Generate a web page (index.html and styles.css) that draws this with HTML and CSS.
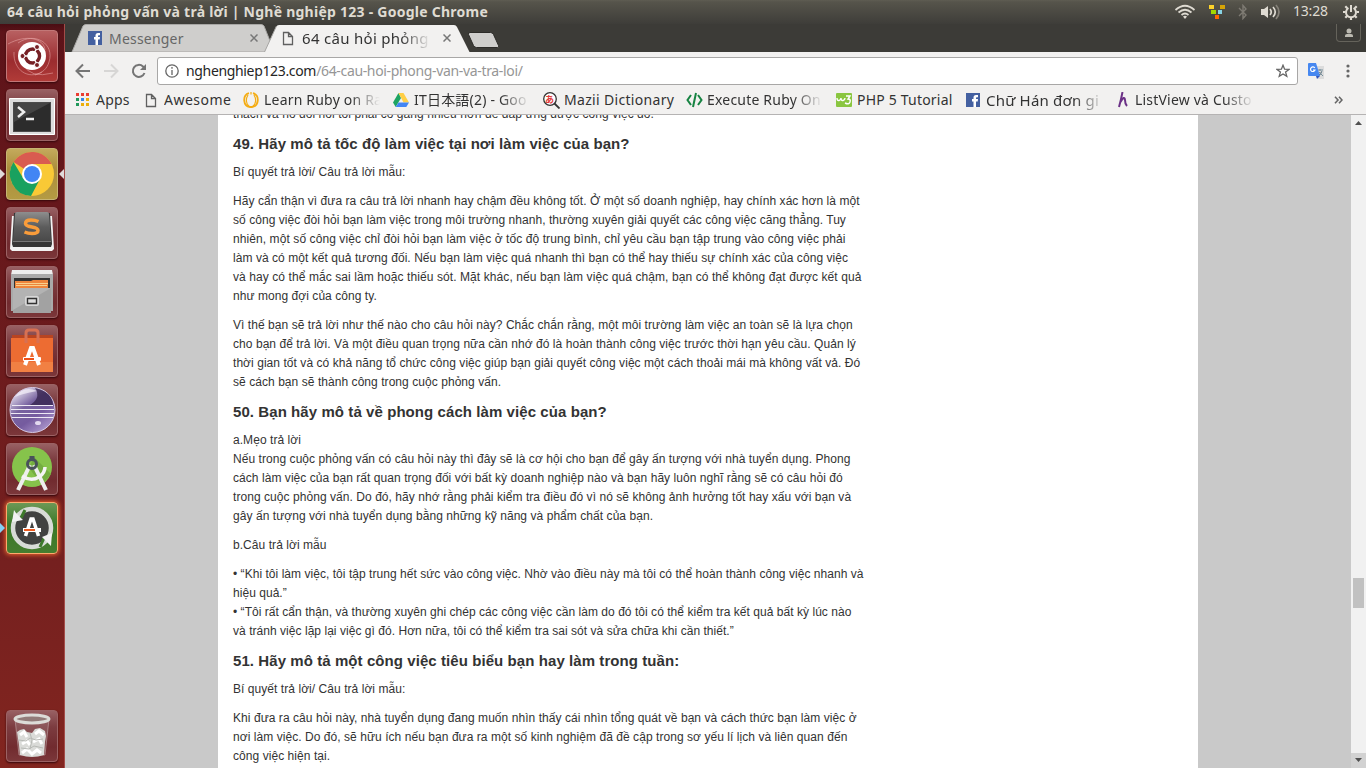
FILE: index.html
```html
<!DOCTYPE html>
<html lang="vi">
<head>
<meta charset="utf-8">
<title>64 câu hỏi phỏng vấn và trả lời | Nghề nghiệp 123</title>
<link rel="stylesheet" href="styles.css">
</head>
<body>
<header class="panel">
  <div class="panel-title">64 câu hỏi phỏng vấn và trả lời | Nghề nghiệp 123 - Google Chrome</div>
  <div class="indicators">
    <svg width="22" height="16" viewBox="0 0 22 16" fill="none" stroke="#dfdbd2" stroke-width="1.7"><path d="M1.500 6Q11-2.500 20.500 6M4.500 8.500Q11 3 17.500 8.500M7.500 11Q11 8 14.500 11"/><path d="M9 12.500Q11 11 13 12.500L11 15Z" fill="#dfdbd2" stroke="none"/></svg>
    <svg width="16" height="16" viewBox="0 0 16 16"><path fill="#fcd22a" d="M0 1h5v4H0z"/><path fill="#d5a406" d="M11 1h5v4h-5z"/><path fill="#a4d800" d="M2 6h5v4H2z"/><path fill="#87d3e4" d="M9 6h4v4H9z"/><path fill="#ff6600" d="M6 11h4v4H6z"/></svg>
    <svg width="10" height="16" viewBox="0 0 10 16" fill="none" stroke="#7e7b73" stroke-width="1.4"><path d="M1 4l7 7-3 3.500V1.500L8 5l-7 7"/></svg>
    <svg width="20" height="16" viewBox="0 0 20 16" fill="none" stroke="#dfdbd2" stroke-width="1.7"><path d="M0 5h3l4-3v12l-4-3H0z" fill="#dfdbd2" stroke="none"/><path d="M9 5q2.500 3 0 6M12 3q4.500 5 0 10"/><path d="M15 1q6 7 0 14" stroke="#858178"/></svg>
    <span class="clock">13:28</span>
    <svg width="16" height="16" viewBox="0 0 16 16" fill="none" stroke="#dfdbd2"><path stroke-width="2" d="M5.500 4A5 5 0 1 0 10.500 4M8 1v7"/><path stroke-width="2.200" d="M0 8h2.500M13.500 8H16M2.300 2.300l2 2M13.700 2.300l-2 2M2.300 13.700l2-2M13.700 13.700l-2-2M8 13.500V16"/></svg>
  </div>
</header>
<div class="desktop">
<nav class="launcher">
  <div class="tile ubuntu"><svg viewBox="0 0 52 52"><g fill="none" stroke="#e9a9a9" stroke-opacity=".55"><path d="M12 13C29 1 49 14 43 32C41 39 36 43 29 45"/><path d="M8 22C7 40 22 50 36 42M2 14C20 4 38 8 39 20M17 34Q24 49 47 43"/></g><circle cx="26" cy="26" r="14" fill="#fff"/><circle cx="26.500" cy="26" r="7" fill="none" stroke="#762025" stroke-width="3.500"/><path d="M26.500 26H17M26.500 26l5-9M26.500 26l5 9" stroke="#fff" stroke-width="1.500"/><circle cx="26.500" cy="26" r="5" fill="#fff"/><g fill="#762025" stroke="#fff"><circle cx="16.500" cy="26" r="2.500"/><circle cx="31" cy="17" r="2.500"/><circle cx="31" cy="35" r="2.500"/></g></svg></div>
  <div class="tile"><svg viewBox="0 0 52 52"><path fill="#ddd" stroke="#fff" d="M3.500 9.500h45v36h-45z"/><path fill="#4b4b4b" d="M7 13h38v30H7z"/><path fill="#2c2c2c" d="M8 14h36v28H8z"/><path fill="#444" d="M8 14h36L8 33z"/><path d="M12 18l6 5-6 5" fill="none" stroke="#eee" stroke-width="2.500"/><path stroke="#eee" stroke-width="2.500" d="M20 30h8"/></svg></div>
  <div class="tile chrome active"><svg viewBox="0 0 52 52"><circle cx="26" cy="26" r="22" fill="#f9c936"/><path fill="#d95b50" d="M26 26L7.500 14A22 22 0 0 1 45.500 16H26z"/><path fill="#19a15f" d="M26 26l-9 4L7.500 14A22 22 0 0 0 25 48l9-17z"/><circle cx="26" cy="26" r="10" fill="#fff"/><circle cx="26" cy="26" r="8" fill="#4285f4"/></svg><i class="pip left"></i><i class="pip right"></i></div>
  <div class="tile"><svg viewBox="0 0 52 52"><defs><linearGradient id="key" x1="0" y1="0" x2="0" y2="1"><stop stop-color="#8e8e8e"/><stop offset=".5" stop-color="#5c5c5c"/><stop offset="1" stop-color="#484848"/></linearGradient></defs><path fill="#f2f2f2" d="M6 9h40l2 33-2 2H6l-2-2z"/><path fill="#363636" d="M8 6h36l2 31-1 3H7l-1-3z"/><path fill="url(#key)" d="M11 5h30q2 0 2 2l2 26q0 2-3 2H10q-3 0-3-2L9 7q0-2 2-2z"/><path fill="#777" d="M7 34h38v1H7z"/><path d="M32.500 14.500Q29 13 25 13Q19.500 13 19.500 16.500Q19.500 19 26 20Q32 21 32 23.500Q32 26.500 26 26.500Q22 26.500 18.500 25" fill="none" stroke="#f99c3a" stroke-width="3.500"/></svg></div>
  <div class="tile"><svg viewBox="0 0 52 52"><path fill="#eee" d="M6 4h40l1 5v35H5V9z"/><path fill="#aaa" d="M5 8h42v37H5z"/><path fill="#333" d="M8 12h36v14H8z"/><path fill="#ee853c" d="M9 15h16l2-1h15v9H9z"/><path stroke="#f8d18e" d="M10 17.500h32M10 19.500h31"/><path fill="#a2a2a2" d="M7 22h38v25H7z"/><path fill="#b3b3b3" d="M7 22h38L7 44z"/><rect x="20" y="31" width="12" height="8" rx="1" fill="#eee" stroke="#d7d7d7" stroke-width="2"/><path fill="#ddd" stroke="#333" stroke-width="1.400" d="M21.500 32.500h9v5h-9z"/></svg></div>
  <div class="tile"><svg viewBox="0 0 52 52"><path fill="#b84421" d="M6 10h41v5H6z"/><path fill="#ed6c32" d="M5 13h42v34H5z"/><path fill="#f18043" d="M5 37h42v10H5z"/><path d="M20 18V8q0-3 3-3h6q3 0 3 3v10" fill="none" stroke="#d87052" stroke-width="3"/><path d="M19 40l6-17h2l6 17" fill="none" stroke="#fff" stroke-width="4"/><rect x="17" y="32" width="18" height="4" rx="1" fill="#fff"/><path fill="#ed5119" d="M18 33h10v2H18z"/></svg></div>
  <div class="tile"><svg viewBox="0 0 52 52"><defs><linearGradient id="orb" x1=".2" y1="0" x2=".9" y2="1"><stop stop-color="#f1edf7"/><stop offset=".35" stop-color="#77629f"/><stop offset=".6" stop-color="#755b9f"/><stop offset="1" stop-color="#bba6d8"/></linearGradient></defs><circle cx="26.500" cy="26" r="22.500" fill="url(#orb)" stroke="#d5c9e5"/><path fill="#312049" fill-opacity=".75" d="M29 4Q47 8 47 22H22Q36 15 29 4"/><path fill="#f1edf7" fill-opacity=".75" d="M9 13Q18 1 31 7Q15 10 9 13"/><path stroke="#eee9f4" stroke-width="1.100" d="M6 21.500h41M5 25.500h43M5 29.500h43M6 33.500h41"/><ellipse cx="32" cy="39" rx="3" ry="2" fill="#e3d9ef"/></svg></div>
  <div class="tile"><svg viewBox="0 0 52 52"><circle cx="26" cy="24" r="20" fill="#86c34b"/><path fill="#74ad40" d="M28 14l17 17-9 11-13-17z"/><path d="M24 22L12 47M28 22l12 25" stroke="#eee" stroke-width="4"/><path d="M16 33q9 6 17 1 6-4 6-10" fill="none" stroke="#f4f4f4" stroke-width="3.500"/><circle cx="26" cy="21" r="4.500" fill="none" stroke="#49515a" stroke-width="3"/><path fill="#49515a" d="M23.500 13h5v4h-5z"/></svg></div>
  <div class="tile updater"><svg viewBox="0 0 52 52"><circle cx="26" cy="26" r="19" fill="#414241" stroke="#d8dbd7" stroke-width="4.500"/><path stroke="#3d792b" stroke-width="3" d="M15 16l4-8M38 36l-4 9"/><path fill="#f2f2f2" d="M8 8l2 3 7 7-11 2zM46 31l-1 13-9-9z"/><path d="M19.500 34l5.500-17h2l5.500 17" fill="none" stroke="#fff" stroke-width="3.500"/><rect x="17" y="26" width="18" height="4" fill="#fff"/><path fill="#ed5b20" d="M18 27h11v2H18z"/></svg><i class="pip left blue"></i></div>
  <div class="tile trash"><svg viewBox="0 0 52 52"><path fill="#ddd" fill-opacity=".15" stroke="#ceb9b9" stroke-opacity=".5" d="M9 9h34l-4 36H13z"/><path fill="#dadbd8" d="M11 22l3-2 4-1 3 3 5 1 3-4 5-1 5 3 1 5-1 6-1 13q-12 4-24 0l-1-10z"/><path d="M14 25l4-3 3 5M29 24l4-3 5 4M16 34l5-3 3 4M27 32l6-3 3 5M16 43l5-4 5 5 5-4 4 3" fill="none" stroke="#fff" stroke-width="3"/><path d="M13 30l7 1 4-3 6 2 7-1M15 38l8 1 5-3 9 2M24 23l2 7-2 9" fill="none" stroke="#b7b9b5"/><ellipse cx="26" cy="9" rx="17" ry="4" fill="#927b79" stroke="#dcdcd8" stroke-width="3"/></svg></div>
</nav>
<main class="browser">
  <div class="tabs">
    <svg class="tab-shapes" width="1301" height="28" viewBox="0 0 1301 28"><path fill="#cfcecc" stroke="#a8a7a5" d="M7 28L18 2q1-1.500 3-1.500H196q2 0 3 1.500l8 20-2 6z"/><path fill="#f2f1f0" d="M199 29l12-26q1-2 3-2H389q2 0 3 2l13 26z"/><path stroke="#a6a5a3" fill="none" d="M199.500 28l12-26"/><path fill="#cfcecc" stroke="#2c2b28" d="M405 8.500q-2 0-1.500 2l5 11q1 2 3 2h21q2 0 1-2l-5-11q-1-2-3-2z"/></svg>
    <div class="tab first"><svg class="fb" viewBox="0 0 14 14"><path fill="#4460a0" d="M0 0h14v14H0z"/><path fill="#fff" d="M7.500 14V8.500H6V6h1.500V4.500Q7.500 2 10 2h2v2.200h-1.200Q10 4.200 10 5v1h2l-.3 2.500H10V14z"/></svg><span class="label messenger">Messenger</span><svg class="close" viewBox="0 0 8 8"><path d="M.5.5l7 7M7.500.5l-7 7"/></svg></div>
    <div class="tab second"><svg class="doc" viewBox="0 0 12 15"><path d="M1.500 1.500h5l4 4v8h-9zM6.500 1.500v4h4"/></svg><span class="label current fade">64 câu hỏi phỏng</span><svg class="close" viewBox="0 0 8 8"><path d="M.5.5l7 7M7.500.5l-7 7"/></svg></div>
    <div class="profile"><svg width="10" height="10" viewBox="0 0 10 10"><circle cx="5" cy="3" r="2.500"/><path d="M1 9V7.500Q1 6 3 6h4q2 0 2 1.500V9z"/></svg></div>
  </div>
  <div class="toolbar">
    <svg width="16" height="16" viewBox="0 0 16 16" class="tool"><path d="M15 8H2M8 1.500L1.500 8 8 14.500"/></svg>
    <svg width="16" height="16" viewBox="0 0 16 16" class="tool pale"><path d="M1 8h13M8 1.500L14.500 8 8 14.500"/></svg>
    <svg width="16" height="16" viewBox="0 0 16 16" class="tool"><path d="M13.500 10A6 6 0 1 1 12 3.500l2 2"/><path fill="#757575" stroke="none" d="M15 1v6H9z"/></svg>
    <div class="omnibox"><svg width="14" height="14" viewBox="0 0 14 14" class="info"><circle cx="7" cy="7" r="6.200"/><path d="M7 6v5M7 3v1.800"/></svg><div class="url">nghenghiep123.com<span>/64-cau-hoi-phong-van-va-tra-loi/</span></div><svg class="star" width="14" height="14" viewBox="0 0 14 14"><path d="M7 1.200l1.600 4 4.400.2-3.400 2.700 1.200 4.300L7 10l-3.800 2.400 1.200-4.300L1 5.400l4.400-.2z"/></svg></div>
    <svg class="translate" width="16" height="16" viewBox="0 0 16 16"><path fill="#dcdcdc" d="M7 3h9v13H10z"/><path d="M10 7h5M12 6v2m2 0q-1 4-4 5m1-4 4 4" stroke="#78909c"/><path fill="#4788f0" d="M1 0h7l4 13H1Q0 13 0 12V1Q0 0 1 0z"/><path fill="#3057bd" d="M8 13h4l-3 3z"/><path d="M6.800 5A2.300 2.300 0 1 0 7 7H5" fill="none" stroke="#fff" stroke-width="1.200"/></svg>
    <svg class="menu" width="4" height="14" viewBox="0 0 4 14" fill="#666"><circle cx="2" cy="2" r="1.600"/><circle cx="2" cy="7" r="1.600"/><circle cx="2" cy="12" r="1.600"/></svg>
  </div>
  <div class="bookmarks">
    <div class="bm b1"><svg width="14" height="14" viewBox="0 0 14 14"><path fill="#ea3e32" d="M0 0h3v3H0zM5 0h3v3H5zM10 0h3v3h-3z"/><path fill="#21985a" d="M0 5h3v3H0zM0 10h3v3H0z"/><path fill="#3487e8" d="M5 5h3v3H5z"/><path fill="#ecae0b" d="M10 5h3v3h-3zM5 10h3v3H5zM10 10h3v3h-3z"/></svg><span class="label">Apps</span></div>
    <div class="bm b2"><svg class="doc" viewBox="0 0 12 15"><path d="M1.500 1.500h5l4 4v8h-9zM6.500 1.500v4h4"/></svg><span class="label">Awesome</span></div>
    <div class="bm b3"><svg width="16" height="16" viewBox="0 0 16 16" fill="none" stroke="#f4ac13" stroke-width="1.800"><path d="M6 1.200C-1 3.500 0 14 7 15h2C16 14 17 3.500 10 1.200"/><path stroke-width="1.200" d="M5 3C2.500 7 3 12 6 14M11 3C13.500 7 13 12 10 14M8 0v2.500"/></svg><span class="label fade">Learn Ruby on Ra</span></div>
    <div class="bm b4"><svg width="16" height="14" viewBox="0 0 16 14"><path fill="#1da462" d="M5.500 0L0 9.500 2.700 14 8 5z"/><path fill="#ffcf46" d="M5.500 0h5L16 9.500h-5.500z"/><path fill="#4285f4" d="M5.500 9.500H16L13.300 14H2.700z"/></svg><span class="label fade">IT日本語(2) - Goo</span></div>
    <div class="bm b5"><svg width="17" height="17" viewBox="0 0 17 17"><circle cx="7" cy="7" r="6.300" fill="#fff" stroke="#333" stroke-width="1.300"/><path d="M11.500 11.500l5 5" stroke="#333" stroke-width="1.800"/><text x="2" y="10.500" class="kana">あ</text></svg><span class="label">Mazii Dictionary</span></div>
    <div class="bm b6"><svg width="17" height="16" viewBox="0 0 17 16" fill="none" stroke="#168342" stroke-width="2"><path d="M5 3L1.500 8 5 13M12 3l3.500 5-3.500 5M10 1L7 15"/></svg><span class="label fade">Execute Ruby On</span></div>
    <div class="bm b7"><svg width="16" height="14" viewBox="0 0 16 14"><rect width="16" height="14" rx="1" fill="#8ac640"/><path d="M1 5q0 3 2 2.500T5 5q0 3 2 2.500T9 5M10 3h4l-2 3q3 0 2 3t-5 1" fill="none" stroke="#fff" stroke-width="1.400"/></svg><span class="label">PHP 5 Tutorial</span></div>
    <div class="bm b8"><svg class="fb" viewBox="0 0 14 14"><path fill="#4460a0" d="M0 0h14v14H0z"/><path fill="#fff" d="M7.500 14V8.500H6V6h1.500V4.500Q7.500 2 10 2h2v2.200h-1.200Q10 4.200 10 5v1h2l-.3 2.500H10V14z"/></svg><span class="label fade">Chữ Hán đơn gi</span></div>
    <div class="bm b9"><svg width="10" height="16" viewBox="0 0 10 16" fill="none" stroke="#6b3186" stroke-width="2"><path d="M4.500 0Q3 8 1 15M2.500 10Q6.500 3 7 8 7 12 9 14"/></svg><span class="label fade">ListView và Custo</span></div>
    <svg class="more" width="9" height="8" viewBox="0 0 9 8"><path d="M1 .8L4 4 1 7.200M5 .8L8 4 5 7.200"/></svg>
  </div>
  <div class="viewport">
    <article class="page">
      <p>thách và nó đòi hỏi tôi phải cố gắng nhiều hơn để đáp ứng được công việc đó.</p>
      <h3>49. Hãy mô tả tốc độ làm việc tại nơi làm việc của bạn?</h3>
      <p>Bí quyết trả lời/ Câu trả lời mẫu:</p>
      <p>Hãy cẩn thận vì đưa ra câu trả lời nhanh hay chậm đều không tốt. Ở một số doanh nghiệp, hay chính xác hơn là một<br>số công việc đòi hỏi bạn làm việc trong môi trường nhanh, thường xuyên giải quyết các công việc căng thẳng. Tuy<br><span class="loose">nhiên, một số công việc chỉ đòi hỏi bạn làm việc ở tốc độ trung bình, chỉ yêu cầu bạn tập trung vào công việc phải</span><br>làm và có một kết quả tương đối. Nếu bạn làm việc quá nhanh thì bạn có thể hay thiếu sự chính xác của công việc<br><span class="loose">và hay có thể mắc sai lầm hoặc thiếu sót. Mặt khác, nếu bạn làm việc quá chậm, bạn có thể không đạt được kết quả</span><br>như mong đợi của công ty.</p>
      <p>Vì thế bạn sẽ trả lời như thế nào cho câu hỏi này? Chắc chắn rằng, một môi trường làm việc an toàn sẽ là lựa chọn<br>cho bạn để trả lời. Và một điều quan trọng nữa cần nhớ đó là hoàn thành công việc trước thời hạn yêu cầu. Quản lý<br>thời gian tốt và có khả năng tổ chức công việc giúp bạn giải quyết công việc một cách thoải mái mà không vất vả. Đó<br>sẽ cách bạn sẽ thành công trong cuộc phỏng vấn.</p>
      <h3>50. Bạn hãy mô tả về phong cách làm việc của bạn?</h3>
      <p>a.Mẹo trả lời<br>Nếu trong cuộc phỏng vấn có câu hỏi này thì đây sẽ là cơ hội cho bạn để gây ấn tượng với nhà tuyển dụng. Phong<br>cách làm việc của bạn rất quan trọng đối với bất kỳ doanh nghiệp nào và bạn hãy luôn nghĩ rằng sẽ có câu hỏi đó<br>trong cuộc phỏng vấn. Do đó, hãy nhớ rằng phải kiểm tra điều đó vì nó sẽ không ảnh hưởng tốt hay xấu với bạn và<br>gây ấn tượng với nhà tuyển dụng bằng những kỹ năng và phẩm chất của bạn.</p>
      <p>b.Câu trả lời mẫu</p>
      <p class="tight">• “Khi tôi làm việc, tôi tập trung hết sức vào công việc. Nhờ vào điều này mà tôi có thể hoàn thành công việc nhanh và<br>hiệu quả.”<br>• “Tôi rất cẩn thận, và thường xuyên ghi chép các công việc cần làm do đó tôi có thể kiểm tra kết quả bất kỳ lúc nào<br>và tránh việc lặp lại việc gì đó. Hơn nữa, tôi có thể kiểm tra sai sót và sửa chữa khi cần thiết.”</p>
      <h3>51. Hãy mô tả một công việc tiêu biểu bạn hay làm trong tuần:</h3>
      <p>Bí quyết trả lời/ Câu trả lời mẫu:</p>
      <p>Khi đưa ra câu hỏi này, nhà tuyển dụng đang muốn nhìn thấy cái nhìn tổng quát về bạn và cách thức bạn làm việc ở<br>nơi làm việc. Do đó, sẽ hữu ích nếu bạn đưa ra một số kinh nghiệm đã đề cập trong sơ yếu lí lịch và liên quan đến<br>công việc hiện tại.</p>
    </article>
    <div class="scrollbar"><svg width="15" height="15" viewBox="0 0 15 15"><path fill="#505050" d="M4 10h7L7.500 6z"/></svg><div class="thumb"></div><svg class="down" width="15" height="15" viewBox="0 0 15 15"><path fill="#505050" d="M4 5h7L7.500 9z"/></svg></div>
  </div>
</main>
</div>
</body>
</html>
```
FILE: styles.css
```css
* { box-sizing: border-box; }
body { margin: 0; width: 1366px; height: 768px; overflow: hidden; font-family: "Noto Sans", "Noto Sans CJK JP", sans-serif; }
svg { display: block; flex: none; }
.panel { height: 24px; display: flex; justify-content: space-between; padding: 0 7px; background: linear-gradient(#5f5d52 0, #56544b 2px, #3e3d39 24px); color: #dfdbd2; }
.panel-title { font-size: 14px; font-weight: 700; line-height: 24px; white-space: nowrap; letter-spacing: .25px; }
.indicators { display: flex; align-items: center; gap: 13px; }
.clock { font-size: 14px; width: 36px; letter-spacing: -.2px; margin-left: -1px; margin-right: 1px; line-height: 22px; padding-bottom: 2px; }
.desktop { display: flex; height: 744px; }
.launcher { width: 65px; flex: none; display: flex; flex-direction: column; gap: 7px; padding: 6px 7px 6px 6px; background: linear-gradient(#490d13 0, #5d1319 8px, #65171b 160px, #75201f 540px, #82251f 744px); border-right: 1px solid #a34c49; }
.tile { width: 52px; height: 52px; flex: none; position: relative; border-radius: 4px; border: 1px solid #9b6264; background: linear-gradient(#986063 0, #7c3c40 16px, #712b2f 36px, #7b373a); box-shadow: 0 1px 2px #36080c; }
.tile > svg { width: 52px; height: 52px; margin: -1px; }
.ubuntu { background: linear-gradient(#b86061, #9b2c2f 60%, #b13b38); border-color: #c27777; }
.chrome { background: linear-gradient(#c4aa5c, #ab8d3c 40%, #b49b43); border-color: #c6b373; }
.updater { background: linear-gradient(#6c9856, #397827 45%, #467d2f); border-color: #ffa96d; box-shadow: 0 0 4px 1px #e5632d; }
.trash { margin-top: auto; }
.pip { position: absolute; top: 20px; width: 0; height: 0; border: 5px solid transparent; }
.pip.left { left: -7px; border-left-color: #e0dada; border-right: 0; }
.pip.right { right: -7px; border-right-color: #e0dada; border-left: 0; }
.pip.blue { border-left-color: #83cff3; }
.browser { width: 1301px; display: flex; flex-direction: column; color: #333; }
.tabs { height: 29px; background: #3c3b37; display: flex; position: relative; border-bottom: 1px solid #f2f1f0; }
.tab-shapes { position: absolute; left: 0; top: 0; }
.tab { display: flex; align-items: center; position: relative; height: 28px; padding-left: 23px; }
.first { width: 193px; color: #666; }
.second { width: 206px; padding-left: 24px; }
.fb { width: 14px; height: 14px; margin-right: 7px; }
.doc { width: 12px; height: 15px; fill: none; stroke: #606060; stroke-width: 1.3; }
.label { font-size: 14px; line-height: 22px; white-space: nowrap; overflow: hidden; }
.messenger { width: 139px; letter-spacing: .2px; padding-top: 1px; }
.current { margin-left: 8px; width: 129px; font-size: 15px; letter-spacing: .3px; }
.fade { -webkit-mask-image: linear-gradient(to right, #000 calc(100% - 30px), transparent); mask-image: linear-gradient(to right, #000 calc(100% - 30px), transparent); }
.close { width: 8px; height: 8px; margin-left: 1px; stroke: #777; stroke-width: 1.5; }
.second .close { margin-left: 12px; }
.first .close { margin-left: 2px; }
.profile { margin-left: auto; margin-right: 5px; width: 25px; height: 18px; border: 1px solid #65635b; border-top: 0; border-radius: 0 0 4px 4px; display: flex; align-items: center; justify-content: center; position: relative; fill: #bbb9b0; }
.toolbar { height: 35px; background: #f2f1f0; display: flex; align-items: center; padding: 0 16px 0 10px; }
.tool { margin-right: 12px; fill: none; stroke: #757575; stroke-width: 2; }
.pale { stroke: #d7d6d5; }
.tool:nth-child(3) { margin-right: 10px; }
.omnibox { width: 1141px; height: 28px; margin-top: 1px; border: 1px solid #a8a7a6; border-radius: 3px; background: #fff; display: flex; align-items: center; padding: 0 7px; }
.info { fill: none; stroke: #666; stroke-width: 1.3; }
.url { margin-left: 7px; padding-bottom: 2px; font-size: 14px; color: #252525; white-space: nowrap; letter-spacing: -.34px; }
.url span { color: #969696; }
.star { margin-left: auto; fill: none; stroke: #656565; stroke-width: 1.3; }
.translate { margin-left: 10px; }
.menu { margin-left: auto; }
.bookmarks { height: 27px; background: #f2f1f0; border-bottom: 1px solid #b5b3b3; display: flex; position: relative; padding-left: 11px; }
.bm { display: flex; align-items: center; gap: 6px; height: 26px; padding-bottom: 2px; flex: none; color: #333; }
.bm .label { flex: 1; letter-spacing: .2px; }
.bm .fb { margin: 0; }
.b1 { width: 69px; }
.b2 { width: 98px; gap: 7px; }
.b2 .label { letter-spacing: .5px; }
.b3 { width: 150px; }
.b3, .b4 { gap: 5px; }
.b4 { width: 150px; }
.b5 { width: 143px; }
.b5, .b6 { gap: 4px; }
.bm.b5 .label { letter-spacing: .32px; }
.b6 { width: 150px; }
.b7 { width: 130px; gap: 5px; }
.b8 { width: 152px; }
.bm.b8 .label { font-size: 15px; }
.b9 { width: 136px; gap: 7px; }
.b3, .b4, .b6, .b8 { padding-right: 13px; }
.kana { font: 700 9px "Noto Sans CJK JP", sans-serif; fill: #e23b3b; }
.more { margin: 8px 23px 0 auto; fill: none; stroke: #666; stroke-width: 1.6; }
.viewport { flex: 1; min-height: 0; background: #c9c9c9; display: flex; overflow: hidden; }
.page { width: 980px; margin-left: 153px; padding-left: 15px; background: #fff; font: 12px/19px "Liberation Sans", Arial, sans-serif; color: #333; white-space: nowrap; letter-spacing: .055px; }
.page p { margin: 0 0 10px; }
.page p:first-child { margin-top: -10px; }
.page h3 { margin: 0 0 10px; font-size: 15px; line-height: 19px; font-weight: 700; letter-spacing: .075px; }
.loose { letter-spacing: .085px; }
.tight { letter-spacing: .04px; }
.scrollbar { width: 15px; margin-left: auto; background: #f1f1f1; display: flex; flex-direction: column; }
.thumb { width: 11px; height: 30px; margin: 448px 2px 0; background: #c1c1c1; }
.down { margin-top: auto; background: #d2d2d2; }
```
